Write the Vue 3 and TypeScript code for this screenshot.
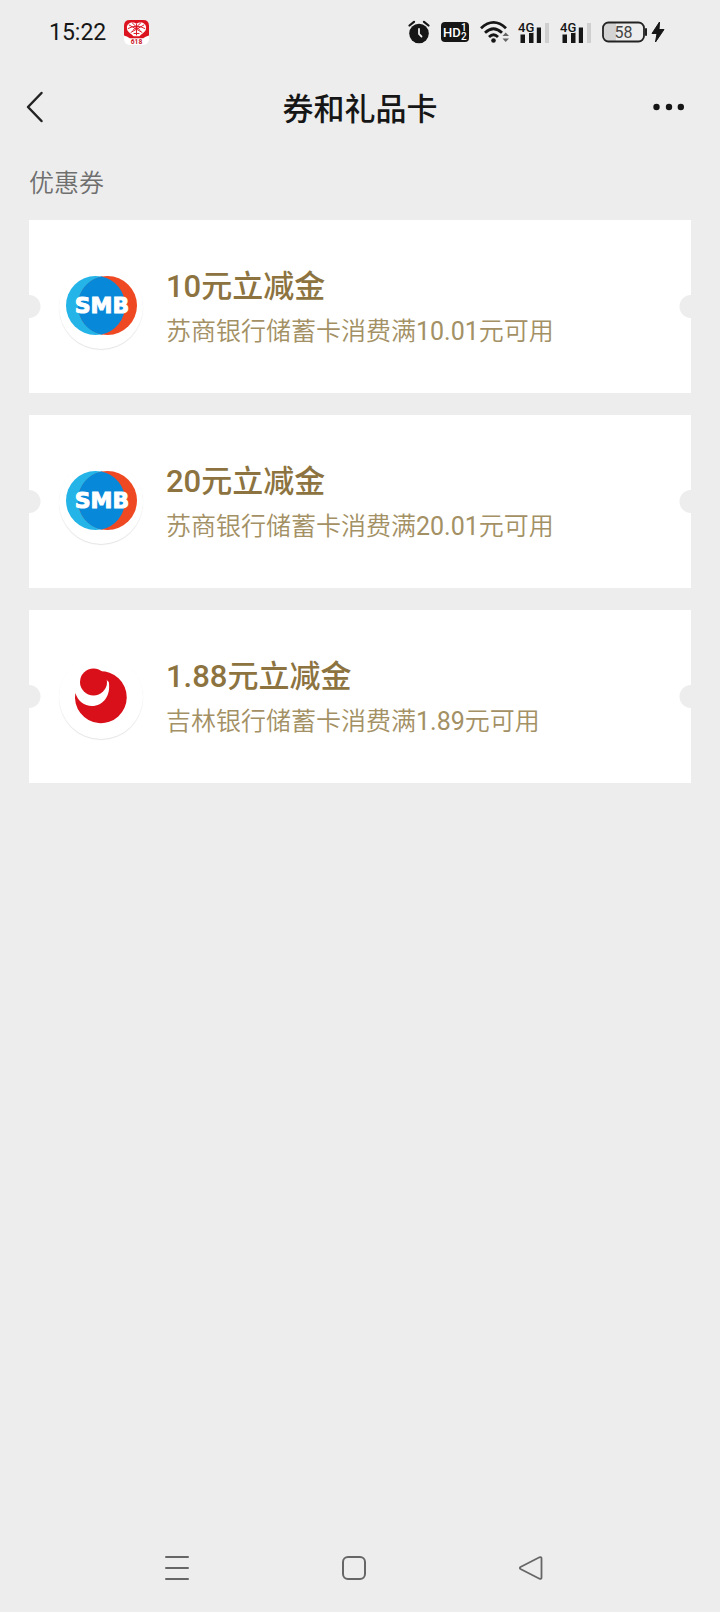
<script setup lang="ts">
interface Coupon {
  id: number
  bank: 'smb' | 'jilin'
  title: string
  description: string
}

const coupons: Coupon[] = [
  { id: 1, bank: 'smb', title: '10元立减金', description: '苏商银行储蓄卡消费满10.01元可用' },
  { id: 2, bank: 'smb', title: '20元立减金', description: '苏商银行储蓄卡消费满20.01元可用' },
  { id: 3, bank: 'jilin', title: '1.88元立减金', description: '吉林银行储蓄卡消费满1.89元可用' },
]
</script>

<template>
  <div class="screen">
    <div class="status-bar">
      <div class="status-left">
        <time class="clock">15:22</time>
        <svg class="app-icon" viewBox="0 0 26 26" aria-hidden="true">
          <rect width="26" height="26" rx="6" fill="#fff" />
          <path d="M0 16V6Q0 0 6 0H20Q26 0 26 6V16Q22 17 20 19H6Q4 17 0 16Z" fill="#dc1420" />
          <path d="M13 4C9 1 3 3 3 8C3 13 8 14 10 17H16C18 14 23 13 23 8C23 3 17 1 13 4Z" fill="#fff" />
          <g fill="none" stroke="#dc1420" stroke-width="1">
            <path d="M13 4V16M5 5L19 13M21 5L7 13M8.5 3L17 11M17.5 3L9 11M4 9Q13 4 22 9M10 14H16" />
          </g>
          <text x="13" y="25" text-anchor="middle" class="app-icon-text">618</text>
        </svg>
      </div>
      <div class="status-right">
        <svg class="alarm" viewBox="0 0 22 24" aria-hidden="true">
          <circle cx="11" cy="13.5" r="9.8" fill="#161616" />
          <path d="M1.5 5.5L6 1.8M20.5 5.5L16 1.8" stroke="#161616" stroke-width="2.2" stroke-linecap="round" />
          <path d="M11 9V14L13.5 16.5" fill="none" stroke="#ededed" stroke-width="1.8" stroke-linecap="round" />
        </svg>
        <svg class="hd" viewBox="0 0 28 20" aria-hidden="true">
          <rect width="28" height="20" rx="4" fill="#161616" />
          <text x="2" y="15" class="hd-text">HD</text>
          <text x="20" y="9" class="hd-digit">1</text>
          <text x="20" y="18" class="hd-digit">2</text>
        </svg>
        <svg class="wifi" viewBox="0 0 30 24" aria-hidden="true">
          <g fill="none" stroke="#161616" stroke-width="2.8">
            <path d="M1 8.3Q13.5-3.5 26 8.3" />
            <path d="M5 12.8Q13.5 4.7 22 12.8" />
            <path d="M9 17Q13.5 12.6 18 17" />
          </g>
          <circle cx="13.5" cy="20.5" r="2.3" fill="#161616" />
          <path d="M22.5 16L25.7 12.5L29 16ZM22.5 18.5H29L25.7 22Z" fill="#666" />
        </svg>
        <svg v-for="sim in 2" :key="sim" class="signal" viewBox="0 0 31 24" aria-hidden="true">
          <path d="M2.5 14.5H7V23H2.5ZM11 12.5H15.5V23H11ZM18.8 7.5H23V23H18.8Z" fill="#161616" />
          <path d="M27 3H31V23H27Z" fill="#cfcfcf" />
          <text x="0" y="11.5" class="signal-text">4G</text>
        </svg>
        <svg class="battery" viewBox="0 0 46 22" aria-hidden="true">
          <path d="M7 2H14V20H7Q2 20 2 15V7Q2 2 7 2Z" fill="#d3d3d3" />
          <rect x="1" y="1.5" width="41" height="19" rx="5.5" fill="none" stroke="#222" stroke-width="1.8" />
          <path d="M44 8V14" stroke="#222" stroke-width="2" stroke-linecap="round" />
          <text x="21.5" y="17" text-anchor="middle" class="battery-text">58</text>
        </svg>
        <svg class="bolt" viewBox="0 0 14 22" aria-hidden="true">
          <path d="M8.5 1L1 12.5H6L4.5 21L13 8.5H8Z" fill="#161616" stroke="#161616" stroke-linejoin="round" />
        </svg>
      </div>
    </div>

    <header class="title-bar">
      <button class="bar-button back" type="button" aria-label="返回">
        <svg viewBox="0 0 18 32" aria-hidden="true">
          <path d="M15.5 2L2 16L15.5 30" fill="none" stroke="#222" stroke-width="2.5" stroke-linecap="round" stroke-linejoin="round" />
        </svg>
      </button>
      <h1>券和礼品卡</h1>
      <button class="bar-button more" type="button" aria-label="更多">
        <svg viewBox="0 0 32 8" aria-hidden="true">
          <circle cx="4.5" cy="4" r="3.2" fill="#161616" />
          <circle cx="17" cy="4" r="3.2" fill="#161616" />
          <circle cx="28.8" cy="4" r="3.2" fill="#161616" />
        </svg>
      </button>
    </header>

    <main class="content">
      <h2>优惠券</h2>
      <ul class="coupons">
        <li v-for="coupon in coupons" :key="coupon.id" class="coupon">
          <div class="logo">
            <svg v-if="coupon.bank === 'smb'" viewBox="0 0 84 84" aria-hidden="true">
              <circle cx="36.5" cy="40.5" r="29.5" fill="#24b4e8" />
              <circle cx="48.5" cy="40.5" r="29.5" fill="#ef4923" />
              <path d="M42.5 11.6A29.5 29.5 0 0 1 42.5 69.4A29.5 29.5 0 0 1 42.5 11.6Z" fill="#0788d9" />
              <text x="43" y="48" text-anchor="middle" class="logo-text">SMB</text>
            </svg>
            <svg v-else viewBox="0 0 84 84" aria-hidden="true">
              <path d="M16.3 38C19 46 25 51 33 51C44 51 52 41 49.8 27L38 16L40 16.4A25.9 25.9 0 1 1 16.3 38Z" fill="#d90f19" />
              <circle cx="34.5" cy="27" r="13.5" fill="#d90f19" />
            </svg>
          </div>
          <div class="details">
            <h3>{{ coupon.title }}</h3>
            <p>{{ coupon.description }}</p>
          </div>
        </li>
      </ul>
    </main>

    <nav class="system-nav" aria-label="系统导航">
      <button type="button" aria-label="最近任务">
        <svg viewBox="0 0 26 26" aria-hidden="true">
          <path d="M2 2H24M2 13H24M2 24H24" fill="none" stroke="#666" stroke-width="2" stroke-linecap="round" />
        </svg>
      </button>
      <button type="button" aria-label="主屏幕">
        <svg viewBox="0 0 26 26" aria-hidden="true">
          <rect x="2" y="2" width="22" height="22" rx="5" fill="none" stroke="#666" stroke-width="2" />
        </svg>
      </button>
      <button type="button" aria-label="返回上一级">
        <svg viewBox="0 0 26 26" aria-hidden="true">
          <path d="M2.5 12Q1.2 13 2.5 14L21.5 23.7Q23.5 24.3 23.5 22.5V3.5Q23.5 1.7 21.5 2.3Z" fill="none" stroke="#666" stroke-width="1.8" stroke-linejoin="round" />
        </svg>
      </button>
    </nav>
  </div>
</template>

<style>
body {
  margin: 0;
  background: #ededed;
}
</style>

<style scoped>
.screen {
  display: flex;
  flex-direction: column;
  min-height: 100vh;
  background: #ededed;
  color: #161616;
  font-family: Roboto, "Noto Sans CJK SC", sans-serif;
}

svg {
  display: block;
}

button {
  display: flex;
  align-items: center;
  justify-content: center;
  padding: 0;
  border: 0;
  background: none;
}

.status-bar {
  display: flex;
  justify-content: space-between;
  height: 64px;
  padding: 0 55px 0 49px;
}

.status-left,
.status-right {
  display: flex;
  align-items: center;
}

.status-left {
  gap: 18px;
}

.status-right {
  gap: 11px;
}

.clock {
  padding-top: 2px;
  font-size: 23px;
  line-height: 32px;
}

.app-icon {
  width: 25px;
  height: 25px;
}

.app-icon-text {
  fill: #c8141e;
  font-size: 7px;
  font-weight: 700;
}

.alarm {
  width: 22px;
  height: 24px;
}

.hd {
  width: 28px;
  height: 20px;
}

.hd-text {
  fill: #fff;
  font-size: 13px;
  font-weight: 500;
}

.hd-digit {
  fill: #fff;
  font-size: 10px;
  font-weight: 500;
}

.wifi {
  width: 30px;
  height: 24px;
  margin-right: -3px;
}

.signal {
  width: 31px;
  height: 24px;
}

.signal-text {
  fill: #161616;
  stroke: #ededed;
  stroke-width: 2px;
  paint-order: stroke;
  font-size: 13px;
  font-weight: 500;
}

.battery {
  width: 46px;
  height: 22px;
}

.battery-text {
  fill: #444;
  font-size: 16px;
}

.bolt {
  width: 14px;
  height: 22px;
  margin-left: -8px;
}

.title-bar {
  display: flex;
  align-items: center;
  justify-content: space-between;
  height: 86px;
  padding: 0 26px;
}

.bar-button {
  justify-content: flex-start;
  width: 42px;
  height: 48px;
}

.back svg {
  width: 18px;
  height: 32px;
}

.more svg {
  width: 32px;
  height: 8px;
}

h1,
h2,
h3,
p {
  margin: 0;
}

h1 {
  padding-top: 6px;
  font-size: 31px;
  font-weight: 500;
  line-height: 44px;
}

.content {
  flex: 1;
  padding: 16px 29px;
}

h2 {
  color: #6f6f6f;
  font-size: 25px;
  font-weight: 350;
  line-height: 36px;
}

.coupons {
  display: flex;
  flex-direction: column;
  gap: 22px;
  margin: 18px 0 0;
  padding: 0;
  list-style: none;
}

.coupon {
  display: flex;
  align-items: center;
  gap: 23px;
  min-height: 173px;
  padding: 0 30px;
  box-sizing: border-box;
  background:
    radial-gradient(circle at 0 50%, #ededed 11px, transparent 12px),
    radial-gradient(circle at 100% 50%, #ededed 11px, #fff 12px);
}

.logo {
  flex: none;
  width: 84px;
  height: 84px;
  border-radius: 50%;
  background: #fff;
  box-shadow: 0 1px 1px #e4e4e4;
}

.logo-text {
  fill: #fff;
  stroke: #fff;
  stroke-width: 1px;
  font-family: "DejaVu Sans", sans-serif;
  font-size: 22px;
  font-weight: 700;
}

.details {
  padding-top: 6px;
}

h3 {
  color: #8c7340;
  font-size: 31px;
  font-weight: 500;
  line-height: 44px;
}

p {
  color: #a39064;
  font-family: Roboto, "Noto Sans CJK SC DemiLight", "Noto Sans CJK SC", sans-serif;
  font-size: 25px;
  line-height: 46px;
}

.system-nav {
  display: flex;
  height: 88px;
  padding: 0 101px 0 88px;
}

.system-nav button {
  flex: 1;
}

.system-nav svg {
  width: 26px;
  height: 26px;
}
</style>
